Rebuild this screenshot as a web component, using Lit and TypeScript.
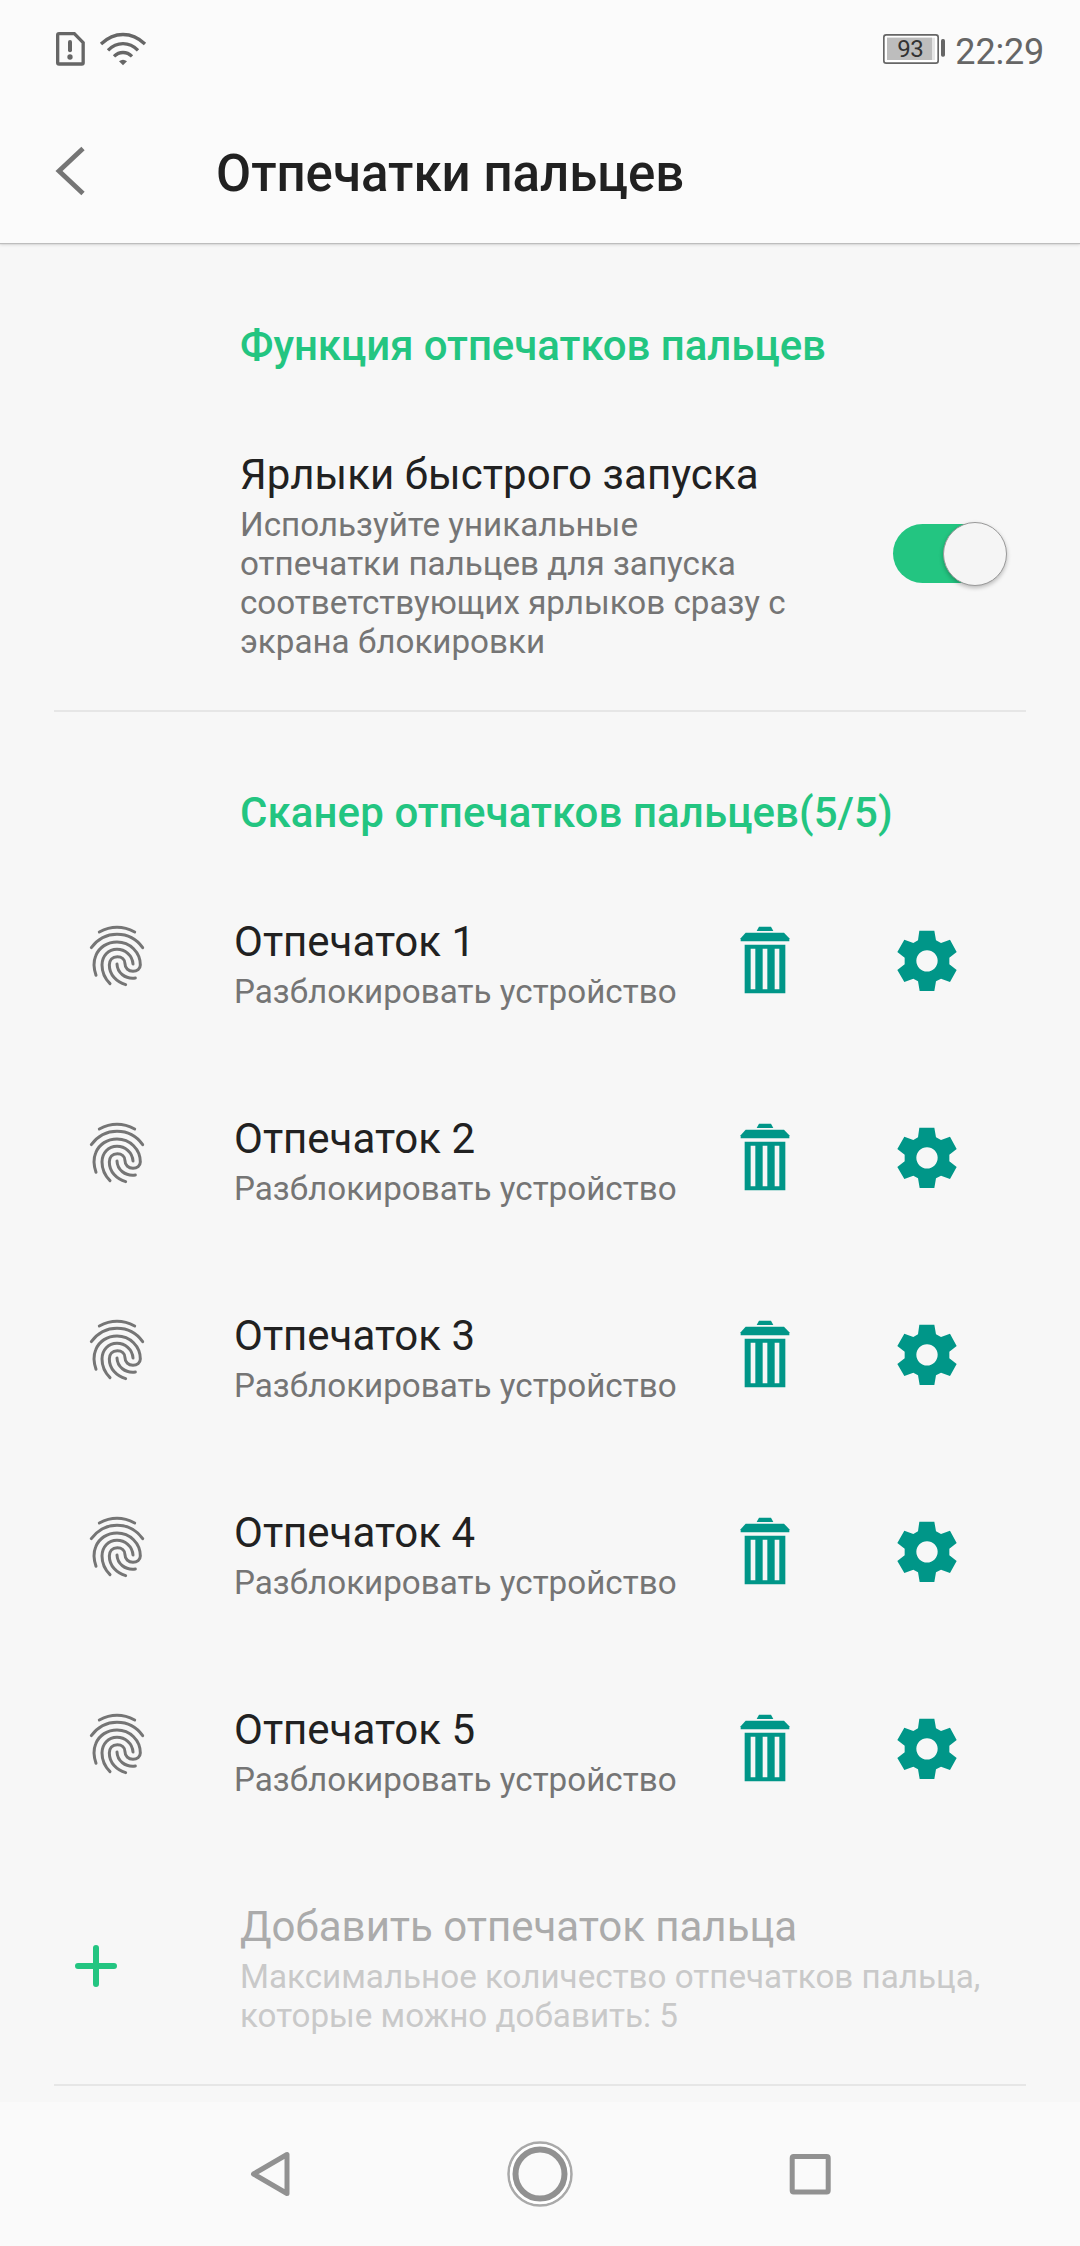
import { LitElement, html, css } from "lit";
import { customElement, property } from "lit/decorators.js";

@customElement("status-bar")
class StatusBar extends LitElement {
  static styles = css`
    :host { display: flex; justify-content: space-between; height: 96px; color: #666; }
    .left { display: block; margin: 20px 0 0 40px; }
    .right { display: flex; margin-right: 36px; }
    .battery { display: grid; margin: 34px 10px 0 0; width: 62px; height: 30px; }
    .battery > * { grid-area: 1 / 1; }
    .level { width: 54px; line-height: 31px; text-align: center; font-size: 24px; letter-spacing: -0.4px; color: #333; }
    .time { font-size: 36px; line-height: 42px; margin-top: 31px; letter-spacing: -0.2px; }
  `;
  render() {
    return html`
      <svg class="left" width="120" height="60" viewBox="0 0 360 180" fill="none" stroke="#666">
        <path d="M57 41H103L129.500 68V128Q129.500 132 125.500 132H57Q53 132 53 128V45Q53 41 57 41Z" stroke-width="10"/>
        <path d="M90 66V91" stroke-width="12" stroke-linecap="round"/>
        <circle cx="90" cy="111" r="8" fill="#666" stroke="none"/>
        <path d="M183 72Q213 43.500 249 43.500T315 72M204 91Q224 71 249 71T294 91M222 109Q234 97.500 249 97.500T276 109" stroke-width="10"/>
        <path d="M237 124Q249 114 261 124L249 136Z" fill="#666" stroke="none"/>
      </svg>
      <div class="right">
        <div class="battery">
          <svg width="62" height="30" viewBox="0 0 186 90">
            <rect x="2.500" y="2.500" width="163" height="85" rx="7" fill="#fff" stroke="#666" stroke-width="5"/>
            <rect x="12" y="11" width="144" height="67" fill="#e6e6e6"/>
            <rect x="12" y="11" width="135" height="67" fill="#bdbdbd"/>
            <rect x="174" y="15" width="12" height="53" rx="5" fill="#666"/>
          </svg>
          <span class="level">93</span>
        </div>
        <span class="time">22:29</span>
      </div>`;
  }
}

@customElement("title-bar")
class TitleBar extends LitElement {
  static styles = css`
    :host { display: flex; height: 147px; }
    .back { display: block; margin: 45px 126px 0 50px; }
    .title { margin: 0; padding-top: 48px; font-size: 51px; line-height: 60px; font-weight: 500; color: #212121; }
  `;
  render() {
    return html`
      <svg class="back" width="40" height="60" fill="none" stroke="#757575" stroke-width="4.800">
        <path d="M33 7.500L9 30L33 52.500"/>
      </svg>
      <h1 class="title">Отпечатки пальцев</h1>`;
  }
}

@customElement("fingerprint-row")
class FingerprintRow extends LitElement {
  @property({ type: Number }) number = 1;
  static styles = css`
    :host { display: flex; height: 197px; }
    .print { margin: 0 69px 0 75px; }
    .text { width: 506px; padding-top: 7px; }
    .name { font-size: 42px; line-height: 49px; color: #212121; }
    .note { font-size: 33.2px; line-height: 39px; margin-top: 6px; color: #757575; white-space: nowrap; }
    .trash { margin-top: 16px; }
    .gear { margin: 20px 0 0 106px; }
    svg { display: block; flex: none; }
  `;
  render() {
    return html`
      <svg class="print" width="90" height="90" viewBox="0 0 270 270" fill="none" stroke="#757575" stroke-width="9" stroke-linecap="round" stroke-linejoin="round">
        <path d="M73 66Q126 38 179 66"/>
        <path d="M49 113C70 85 98 73 126 73S183 85 203 113"/>
        <path d="M63 196C55 172 56 152 62 138C72 111 98 96 126 96C165 96 196 127 196 165C196 176 186 184 174 184C160 184 150 174 150 161C150 148 140 140 127 140C112 140 103 150 103 165C103 195 125 216 152 224"/>
        <path d="M174 162C172 135 150 118 126 118C100 118 81 138 81 165C81 190 92 208 105 221"/>
        <path d="M126 162C127 188 150 208 181 204"/>
      </svg>
      <div class="text">
        <div class="name">Отпечаток ${this.number}</div>
        <div class="note">Разблокировать устройство</div>
      </div>
      <svg class="trash" width="50" height="68" viewBox="60 48 150 204" fill="#009688">
        <path d="M117 50H153L160 63H110Z"/>
        <path d="M77 68H192L208 85V94H62V85Z"/>
        <path fill-rule="evenodd" d="M74 104H196V250H74ZM92 116V238H106V116ZM128 116V238H142V116ZM164 116V238H178V116Z"/>
      </svg>
      <svg class="gear" width="62" height="62" viewBox="528 60 186 186" fill="#009688">
        <path fill-rule="evenodd" d="M598 62H643L648 91L663 99L690 89L710 126L688 143V163L710 180L690 216L663 206L648 214L643 243H599L594 214L580 206L553 216L532 180L554 163V143L532 126L553 89L580 99L594 91ZM621 120.500A32 32 0 1 0 621 184.500A32 32 0 1 0 621 120.500Z"/>
      </svg>`;
  }
}

@customElement("nav-bar")
class NavBar extends LitElement {
  static styles = css`
    :host { display: flex; justify-content: space-between; align-items: center; height: 144px; padding: 0 235px; box-sizing: border-box; background: #fafafa; }
  `;
  render() {
    return html`
      <svg width="70" height="70" fill="none" stroke="#919191" stroke-width="5" stroke-linejoin="round">
        <path d="M52 15.500V54.500L18.500 35Z"/>
      </svg>
      <svg width="70" height="70" fill="none">
        <circle cx="35" cy="35" r="31.500" stroke="#a9a9a9" stroke-width="2.500"/>
        <circle cx="35" cy="35" r="28.500" stroke="#fff" stroke-width="3"/>
        <circle cx="35" cy="35" r="24.500" stroke="#919191" stroke-width="6"/>
      </svg>
      <svg width="70" height="70" fill="none">
        <rect x="17.200" y="17.500" width="36" height="35.500" rx="1.500" stroke="#919191" stroke-width="5"/>
      </svg>`;
  }
}

@customElement("app-root")
class AppRoot extends LitElement {
  static styles = css`
    :host { display: flex; flex-direction: column; height: 2246px; background: #f7f7f7; font-family: Roboto, "Noto Sans", sans-serif; overflow: hidden; }
    .head { background: #fbfbfb; height: 243px; box-shadow: 0 1px 1px #bdbdbd, 0 2px 3px rgba(0, 0, 0, 0.12); }
    .body { flex: 1; }
    .section { margin: 0; padding-left: 240px; font-size: 42px; line-height: 49px; font-weight: 500; color: #23c581; }
    .first { margin-top: 78px; letter-spacing: -0.05px; }
    .second { margin-top: 76px; letter-spacing: 0.09px; }
    .shortcut { display: flex; justify-content: space-between; align-items: flex-start; padding: 80px 73px 0 240px; height: 340px; box-sizing: border-box; }
    .copy { width: 560px; }
    .name { font-size: 42px; line-height: 49px; color: #212121; }
    .shortcut .name { letter-spacing: 0.07px; }
    .note { font-size: 33.2px; line-height: 39px; margin-top: 6px; color: #757575; }
    .switch { display: flex; justify-content: flex-end; align-items: center; width: 114px; height: 59px; margin-top: 74px; border-radius: 30px; background: linear-gradient(90deg, #23c581 96px, transparent 96px); }
    .knob { width: 62px; height: 62px; flex: none; border: 1px solid #999; border-radius: 50%; background: #f5f5f5; box-shadow: 0 2px 4px rgba(0, 0, 0, 0.25); }
    .rule { height: 2px; margin: 0 54px; background: #e6e6e6; }
    .list { margin-top: 73px; }
    .add { display: flex; height: 189px; }
    .plus { display: block; margin: 47px 120px 0 72px; }
    .add .copy { width: 770px; padding-top: 7px; }
    .add .name { color: #ababab; }
    .add .note { color: #c9c9c9; }
  `;
  render() {
    return html`
      <header class="head">
        <status-bar></status-bar>
        <title-bar></title-bar>
      </header>
      <main class="body">
        <h2 class="section first">Функция отпечатков пальцев</h2>
        <div class="shortcut">
          <div class="copy">
            <div class="name">Ярлыки быстрого запуска</div>
            <div class="note">Используйте уникальные<br>отпечатки пальцев для запуска<br>соответствующих ярлыков сразу с<br>экрана блокировки</div>
          </div>
          <div class="switch" role="switch" aria-checked="true"><div class="knob"></div></div>
        </div>
        <div class="rule"></div>
        <h2 class="section second">Сканер отпечатков пальцев(5/5)</h2>
        <div class="list">
          ${[1, 2, 3, 4, 5].map((n) => html`<fingerprint-row .number=${n}></fingerprint-row>`)}
          <div class="add">
            <svg class="plus" width="48" height="48" stroke="#23c581" stroke-width="6" stroke-linecap="round">
              <path d="M6 24H42M24 6V42"/>
            </svg>
            <div class="copy">
              <div class="name">Добавить отпечаток пальца</div>
              <div class="note">Максимальное количество отпечатков пальца,<br>которые можно добавить: 5</div>
            </div>
          </div>
        </div>
        <div class="rule"></div>
      </main>
      <nav-bar></nav-bar>`;
  }
}
